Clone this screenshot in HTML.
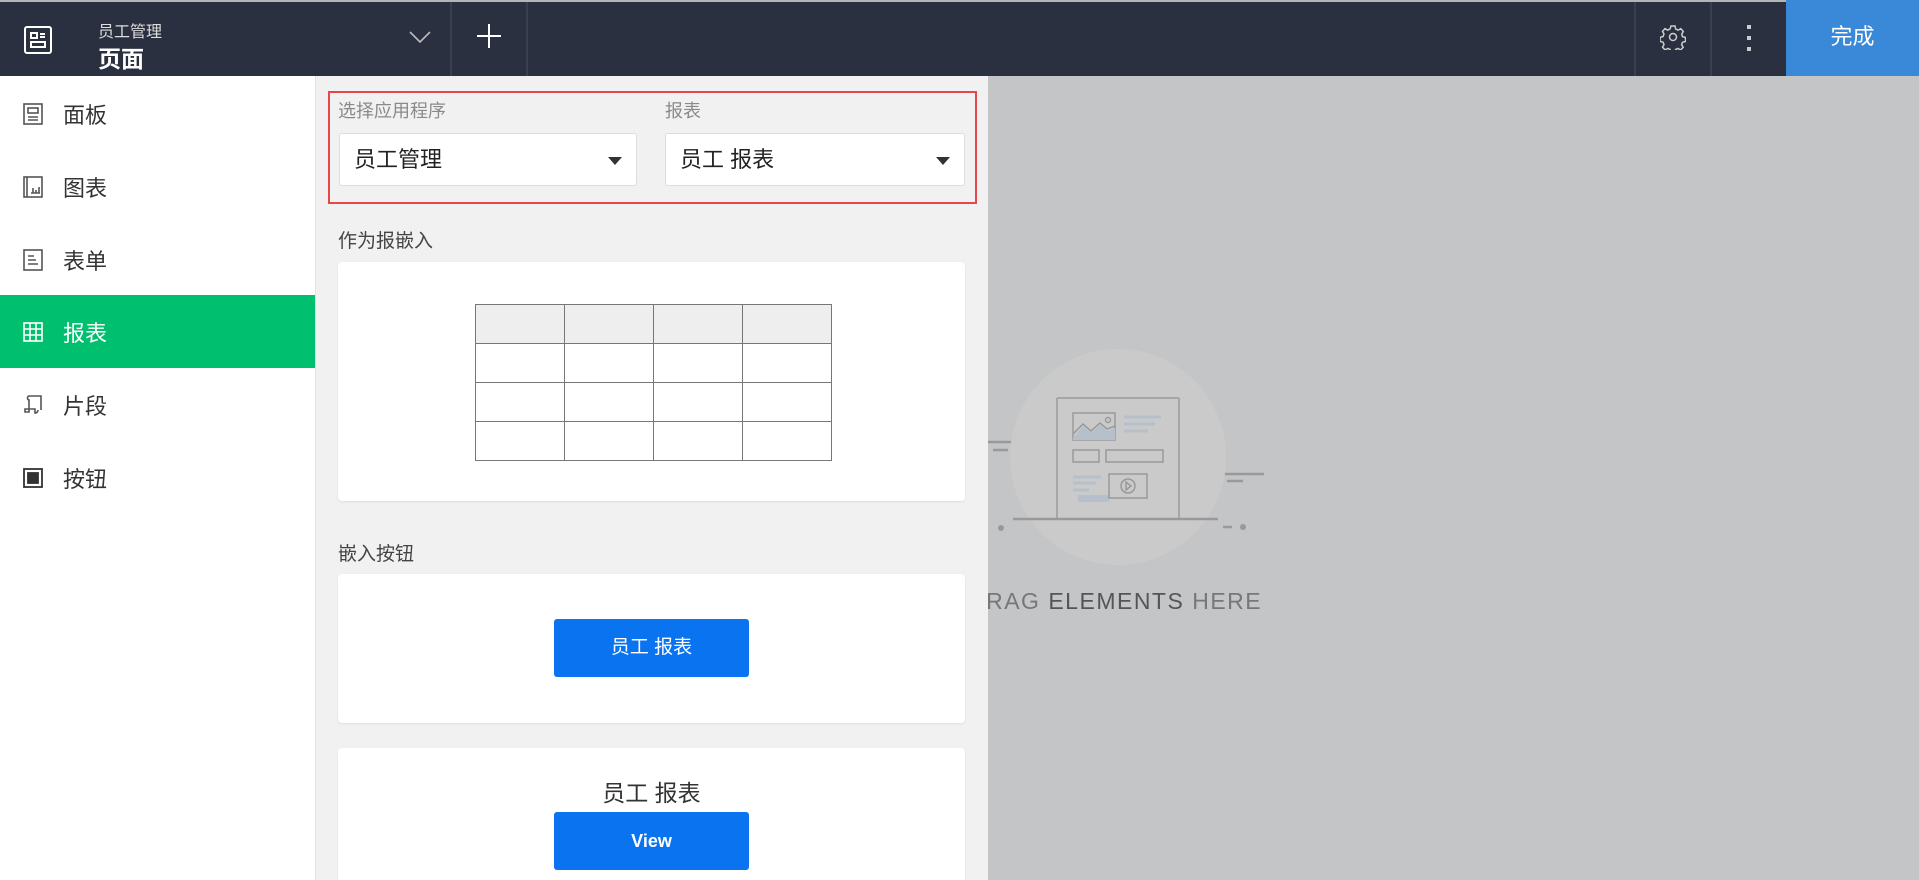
<!DOCTYPE html>
<html><head><meta charset="utf-8"><style>
*{box-sizing:border-box;margin:0;padding:0}
html,body{width:1919px;height:880px;overflow:hidden}
body{position:relative;font-family:"Liberation Sans","Noto Sans CJK SC",sans-serif;background:#c4c5c7}
.a{position:absolute}
#hdr{left:0;top:0;width:1919px;height:76px;background:#2a3040;border-top:2px solid #b5b5b5}
.sep{top:0;width:2px;height:74px;background:#383f52}
#side{left:0;top:76px;width:315px;height:804px;background:#fff}
.it{left:0;width:315px;height:73px;display:flex;align-items:center;font-size:22px;color:#333}
.it svg{margin-left:22px;margin-right:19px}
#panel{left:315px;top:76px;width:673px;height:804px;background:#f1f1f1;border-left:1px solid #e2e2e2;overflow:hidden;z-index:2}
.lbl{font-size:18px;color:#8a8a8a}
.sel{background:#fff;border:1px solid #ddd;border-radius:3px;height:53px;font-size:22px;color:#222;padding-left:14px;line-height:51px}
.sel:after{content:"";position:absolute;right:14px;top:23px;border-left:7px solid transparent;border-right:7px solid transparent;border-top:8px solid #333}
.card{background:#fff;border-radius:4px;box-shadow:0 1px 2px rgba(0,0,0,.08)}
table{border-collapse:collapse}
td{border:1.5px solid #777;width:89px;height:39px}
.btn{background:#0a73f0;color:#fff;border-radius:3px;text-align:center}
</style></head><body>
<div id="hdr" class="a">
<svg class="a" style="left:22px;top:22px" width="32" height="32" viewBox="0 0 32 32" fill="none" stroke="#fff" stroke-width="2"><rect x="3" y="3" width="26" height="26" rx="2"/><rect x="9" y="9" width="6" height="5"/><path d="M18 10h5M18 13h5"/><rect x="9" y="18" width="14" height="5"/></svg>
<div class="a" style="left:98px;top:16px;font-size:16px;color:#ddd">员工管理</div>
<div class="a" style="left:98px;top:38px;font-size:23px;color:#fff;font-weight:bold">页面</div>
<svg class="a" style="left:408px;top:28px" width="24" height="14" viewBox="0 0 24 14" fill="none" stroke="#bbb" stroke-width="1.6"><path d="M2 2l10 10L22 2"/></svg>
<div class="sep a" style="left:450px"></div>
<svg class="a" style="left:476px;top:21px" width="26" height="26" stroke="#fff" stroke-width="2"><path d="M13 1v24M1 13h24"/></svg>
<div class="sep a" style="left:526px"></div>
<div class="sep a" style="left:1634px"></div>
<svg class="a" style="left:1660px;top:22px" width="26" height="26" viewBox="0 0 26 26" fill="none" stroke="#ccc" stroke-width="1.5"><path d="M11 2h4l.7 3 2.3 1.2 2.8-1.5 2.5 2.8-1.6 2.6.8 2.5 3 .9v4l-3 .8-.9 2.4 1.6 2.6-2.6 2.7-2.6-1.5-2.4.9-.7 3h-4l-.8-3-2.3-1-2.7 1.5-2.6-2.7 1.5-2.6-.9-2.4-3-.8v-4l3-.9.9-2.5-1.5-2.6 2.6-2.8 2.6 1.5 2.4-1.2z"/><circle cx="13" cy="13" r="3.5"/></svg>
<div class="sep a" style="left:1710px"></div>
<div class="a" style="left:1747px;top:23px;width:4px;height:4px;background:#ccc"></div>
<div class="a" style="left:1747px;top:34px;width:4px;height:4px;background:#ccc"></div>
<div class="a" style="left:1747px;top:45px;width:4px;height:4px;background:#ccc"></div>
<div class="a" style="left:1786px;top:-2px;width:133px;height:76px;background:#3a88d8;color:#fff;font-size:22px;text-align:center;line-height:74px">完成</div>
</div>
<div id="side" class="a">
<div class="it a" style="top:1px"><svg width="22" height="24" fill="none" stroke="#555" stroke-width="1.6"><rect x="2" y="2" width="18" height="20"/><rect x="6" y="6" width="10" height="5"/><path d="M6 15h10M6 18h10"/></svg>面板</div>
<div class="it a" style="top:74px"><svg width="22" height="24" fill="none" stroke="#555" stroke-width="1.6"><rect x="2" y="2" width="18" height="20"/><path d="M5 2v20M11 18v-5M14 18v-3M17 18v-6M9 18h9"/></svg>图表</div>
<div class="it a" style="top:147px"><svg width="22" height="24" fill="none" stroke="#555" stroke-width="1.6"><rect x="2" y="2" width="18" height="20"/><path d="M6 8h6M6 12h8M6 16h10"/></svg>表单</div>
<div class="it a" style="top:219px;background:#00bf6f;color:#fff"><svg width="22" height="24" fill="none" stroke="#fff" stroke-width="1.6"><rect x="2" y="3" width="18" height="18"/><path d="M8 3v18M14 3v18M2 9h18M2 15h18"/></svg>报表</div>
<div class="it a" style="top:292px"><svg width="22" height="24" fill="none" stroke="#555" stroke-width="1.6"><path d="M7 3h12v14M7 3c-2 0-2 4 0 4v12H3v-3h10v4c3 0 3-3 3-3"/></svg>片段</div>
<div class="it a" style="top:365px"><svg width="22" height="24" fill="none" stroke="#333" stroke-width="1.8"><rect x="2" y="3" width="18" height="18"/><rect x="6" y="7" width="10" height="10" fill="#333"/></svg>按钮</div>
</div>
<svg class="a" style="left:980px;top:330px" width="300" height="300" viewBox="0 0 300 300" fill="none" stroke="#999" stroke-width="1.5">
<circle cx="138" cy="127" r="108" fill="#cacaca" stroke="none"/>
<rect x="77" y="68" width="122" height="121" rx="1"/>
<path d="M33 189h205" stroke-width="2.5"/>
<rect x="93" y="83" width="42" height="27" fill="none"/>
<path d="M93 108l10-12 8 7 9-8 7 6 8-3v12H93z" fill="#b5c0cb" stroke="none"/>
<path d="M93 104l10-10 8 7 9-8 7 6 8-3"/><circle cx="128" cy="90" r="2.5"/>
<path d="M144 87h37M144 94h31M144 101h24M93 147h28M93 153h23M93 160h16" stroke="#b5c0cb" stroke-width="3"/>
<rect x="98" y="165" width="31" height="7" fill="#b5c0cb" stroke="none"/>
<rect x="93" y="120" width="26" height="12"/><rect x="126" y="120" width="57" height="12"/>
<rect x="129" y="144" width="38" height="24"/><circle cx="148" cy="156" r="7"/><path d="M146 152v8l5-4z"/>
<path d="M8 112h23M13 120h15M245 144h39M247 151h16M243 197h9" stroke-width="2.5"/>
<circle cx="21" cy="198" r="3" fill="#999" stroke="none"/><circle cx="263" cy="197" r="3" fill="#999" stroke="none"/>
</svg>
<div class="a" style="left:968px;top:588px;font-size:23px;color:#777;letter-spacing:1.5px;white-space:nowrap">DRAG <b style="color:#555;font-weight:normal">ELEMENTS</b> HERE</div>
<div id="panel" class="a">
<div class="a" style="left:12px;top:15px;width:649px;height:113px;border:2.5px solid #e54848"></div>
<div class="a lbl" style="left:22px;top:21px">选择应用程序</div>
<div class="a lbl" style="left:349px;top:21px">报表</div>
<div class="a sel" style="left:23px;top:57px;width:298px">员工管理</div>
<div class="a sel" style="left:349px;top:57px;width:300px">员工 报表</div>
<div class="a" style="left:22px;top:150px;font-size:19px;color:#444">作为报嵌入</div>
<div class="a card" style="left:22px;top:186px;width:627px;height:239px">
<table class="a" style="left:137px;top:42px"><tr style="background:#eee"><td></td><td></td><td></td><td></td></tr><tr><td></td><td></td><td></td><td></td></tr><tr><td></td><td></td><td></td><td></td></tr><tr><td></td><td></td><td></td><td></td></tr></table>
</div>
<div class="a" style="left:22px;top:463px;font-size:19px;color:#444">嵌入按钮</div>
<div class="a card" style="left:22px;top:498px;width:627px;height:149px">
<div class="a btn" style="left:216px;top:45px;width:195px;height:58px;line-height:58px;font-size:19px">员工 报表</div></div>
<div class="a card" style="left:22px;top:672px;width:627px;height:160px">
<div class="a" style="left:0;width:627px;top:26px;text-align:center;font-size:23px;color:#333">员工 报表</div>
<div class="a btn" style="left:216px;top:64px;width:195px;height:58px;line-height:58px;font-size:18px;font-weight:bold">View</div></div>
</div>
</body></html>
